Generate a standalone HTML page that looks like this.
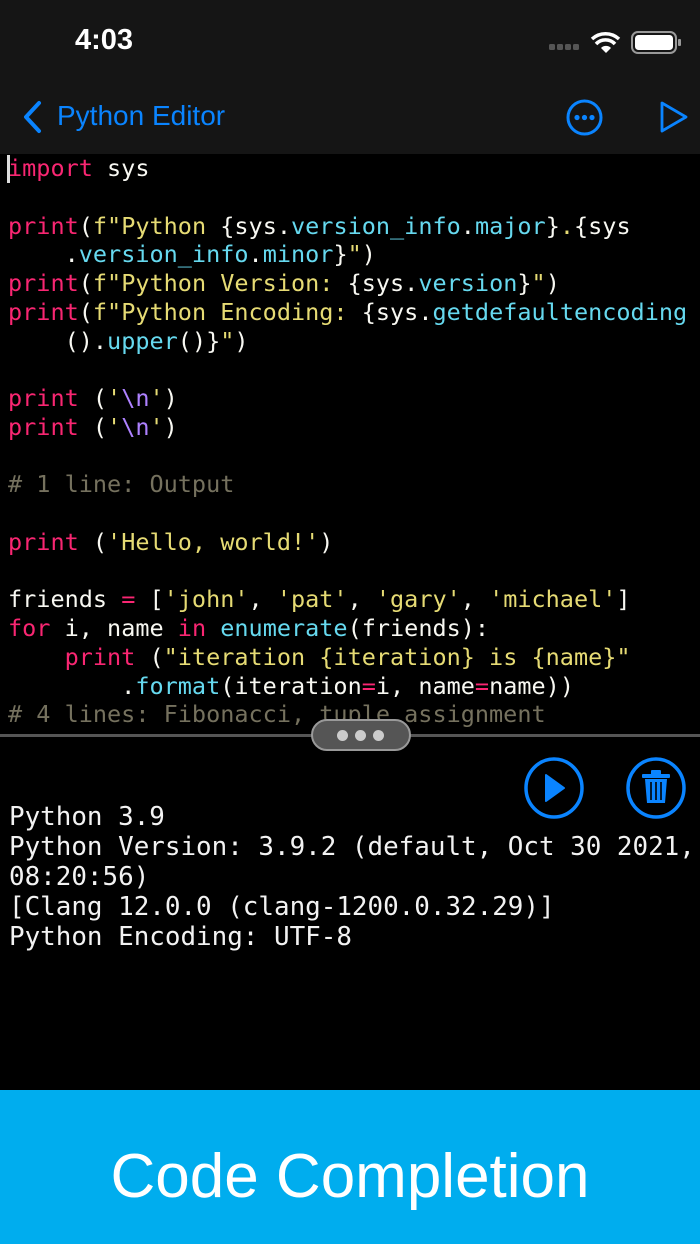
<!DOCTYPE html>
<html style="width:700px;height:1244px;overflow:hidden"><head><meta charset="utf-8"><style>
*{margin:0;padding:0;box-sizing:border-box}
body{width:700px;height:1244px;background:#000;overflow:hidden;position:relative;font-family:"Liberation Sans",sans-serif}
.top{position:absolute;left:0;top:0;width:700px;height:154px;background:#151515}
.time{position:absolute;left:75px;top:24px;color:#fff;font-size:29px;font-weight:600}
.nav{position:absolute;left:57px;top:100px;color:#0a84ff;font-size:28px}
pre{font-family:"DejaVu Sans Mono","Liberation Mono",monospace;white-space:pre}
.code{position:absolute;left:8px;top:154px;font-size:23.5px;line-height:28.75px;color:#f8f8f2}
.k{color:#f92672}.s{color:#e6db74}.c{color:#66d9ef}.p{color:#ae81ff}.m{color:#75715e}
.out{position:absolute;left:9px;top:802px;font-size:25.9px;line-height:30px;color:#f2f2f2}
.div{position:absolute;left:0;top:734px;width:700px;height:3px;background:#555}
.pill{position:absolute;left:311px;top:719px;width:100px;height:32px;border-radius:16px;background:#555;border:2px solid #999}
.pill i{position:absolute;top:9px;width:11px;height:11px;border-radius:50%;background:#ccc}
.banner{position:absolute;left:0;top:1090px;width:700px;height:154px;background:#00adee;color:#fff;font-size:62px;text-align:center;line-height:174px}
</style></head><body>
<div class="top"></div>
<div class="time">4:03</div>
<svg style="position:absolute;left:545px;top:28px" width="140" height="30">
<g fill="#555"><rect x="4" y="16" width="6" height="6" rx="1.5"/><rect x="12" y="16" width="6" height="6" rx="1.5"/><rect x="20" y="16" width="6" height="6" rx="1.5"/><rect x="28" y="16" width="6" height="6" rx="1.5"/></g>
<g fill="none" stroke="#fff" stroke-width="3.5"><path d="M47 11a20 20 0 0 1 27 0"/><path d="M51 16a13 13 0 0 1 19 0"/></g>
<path d="M56 20l5 5 5-5a7 7 0 0 0-10 0z" fill="#fff"/>
<rect x="87" y="4" width="44" height="21" rx="6" fill="none" stroke="#999" stroke-width="2"/>
<rect x="90" y="7" width="38" height="15" rx="3.5" fill="#fff"/>
<rect x="133" y="11" width="3" height="7" rx="1" fill="#999"/>
</svg>
<svg style="position:absolute;left:20px;top:100px" width="24" height="34"><path d="M19 3L6 17l13 14" fill="none" stroke="#0a84ff" stroke-width="4" stroke-linecap="round" stroke-linejoin="round"/></svg>
<div class="nav">Python Editor</div>
<svg style="position:absolute;left:565px;top:98px" width="40" height="40"><circle cx="19.5" cy="19.5" r="16.5" fill="none" stroke="#0a84ff" stroke-width="3"/><g fill="#0a84ff"><circle cx="12" cy="19.5" r="2.6"/><circle cx="19.5" cy="19.5" r="2.6"/><circle cx="27" cy="19.5" r="2.6"/></g></svg>
<svg style="position:absolute;left:658px;top:100px" width="34" height="34"><path d="M4 3L28 17 4 31z" fill="none" stroke="#0a84ff" stroke-width="2.8" stroke-linejoin="round"/></svg>
<div style="position:absolute;left:7px;top:155px;width:3px;height:28px;background:#ddd"></div>
<pre class="code"><span class="k">import</span> sys

<span class="k">print</span>(<span class="s">f"Python </span>{sys.<span class="c">version_info</span>.<span class="c">major</span>}<span class="s">.</span>{sys
    .<span class="c">version_info</span>.<span class="c">minor</span>}<span class="s">"</span>)
<span class="k">print</span>(<span class="s">f"Python Version: </span>{sys.<span class="c">version</span>}<span class="s">"</span>)
<span class="k">print</span>(<span class="s">f"Python Encoding: </span>{sys.<span class="c">getdefaultencoding</span>
    ().<span class="c">upper</span>()}<span class="s">"</span>)

<span class="k">print</span> (<span class="s">'</span><span class="p">\n</span><span class="s">'</span>)
<span class="k">print</span> (<span class="s">'</span><span class="p">\n</span><span class="s">'</span>)

<span class="m"># 1 line: Output</span>

<span class="k">print</span> (<span class="s">'Hello, world!'</span>)

friends <span class="k">=</span> [<span class="s">'john'</span>, <span class="s">'pat'</span>, <span class="s">'gary'</span>, <span class="s">'michael'</span>]
<span class="k">for</span> i, name <span class="k">in</span> <span class="c">enumerate</span>(friends):
    <span class="k">print</span> (<span class="s">"iteration {iteration} is {name}"</span>
        .<span class="c">format</span>(iteration<span class="k">=</span>i, name<span class="k">=</span>name))
<span class="m"># 4 lines: Fibonacci, tuple assignment</span></pre>
<div class="div"></div>
<div class="pill"><i style="left:24px"></i><i style="left:42px"></i><i style="left:60px"></i></div>
<svg style="position:absolute;left:522px;top:756px" width="64" height="64"><ellipse cx="32" cy="32" rx="28" ry="29" fill="none" stroke="#0a84ff" stroke-width="3.5"/><path d="M24 19L42 32 24 45z" fill="#0a84ff" stroke="#0a84ff" stroke-width="2" stroke-linejoin="round"/></svg>
<svg style="position:absolute;left:624px;top:756px" width="64" height="64"><ellipse cx="32" cy="32" rx="28" ry="29" fill="none" stroke="#0a84ff" stroke-width="3.5"/><g fill="#0a84ff"><rect x="18" y="18" width="28" height="4" rx="1"/><rect x="27" y="14" width="10" height="5" rx="1"/><path d="M21 23h22l-2 24H23z"/></g><g stroke="#000" stroke-width="1.6"><path d="M27 26v18M32 26v18M37 26v18"/></g></svg>
<pre class="out">Python 3.9
Python Version: 3.9.2 (default, Oct 30 2021,
08:20:56)
[Clang 12.0.0 (clang-1200.0.32.29)]
Python Encoding: UTF-8</pre>
<div class="banner">Code Completion</div>
</body></html>
